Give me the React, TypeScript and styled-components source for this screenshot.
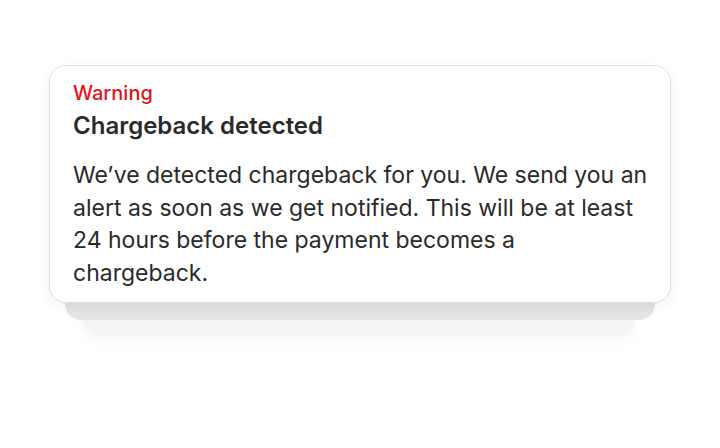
import styled, { createGlobalStyle } from "styled-components";

const GlobalStyle = createGlobalStyle`
  html, body {
    margin: 0;
    padding: 0;
    background: #ffffff;
  }

  body {
    font-family: Inter, "Noto Sans", "Liberation Sans", sans-serif;
    -webkit-font-smoothing: antialiased;
  }
`;

const Page = styled.div`
  width: 720px;
  height: 448px;
  padding: 65px 0 0 49px;
  box-sizing: border-box;
`;

// the card with two faded cards peeking out below it
const Stack = styled.div`
  position: relative;
  width: 622px;

  &::before,
  &::after {
    content: "";
    position: absolute;
    border-radius: 16px;
  }

  /* middle card */
  &::before {
    left: 16px;
    right: 16px;
    bottom: -17px;
    height: 60px;
    background: linear-gradient(180deg, #d9d9d9 0%, #e6e6e6 100%);
    z-index: 1;
  }

  /* back card */
  &::after {
    left: 34px;
    right: 36px;
    bottom: -33px;
    height: 60px;
    background: linear-gradient(180deg, #ececec 0%, #f6f6f6 100%);
    box-shadow: 0 6px 14px rgba(0, 0, 0, 0.03);
    z-index: 0;
  }
`;

const Card = styled.div`
  position: relative;
  z-index: 2;
  background: #ffffff;
  border: 1.5px solid #dedede;
  border-radius: 17px;
  padding: 15px 20px 13px 23px;
  box-shadow: 0 4px 14px rgba(0, 0, 0, 0.06);
`;

const Label = styled.div<{ $tone?: "warning" | "info" }>`
  font-size: 20px;
  font-weight: 500;
  line-height: 24px;
  color: ${(p) => (p.$tone === "info" ? "#1a5fd0" : "#e0161b")};
`;

const Title = styled.h2`
  margin: 6px 0 0;
  font-size: 24px;
  font-weight: 600;
  line-height: 30px;
  color: #2a2a2a;
`;

const Body = styled.p`
  margin: 18px 0 0;
  font-size: 23px;
  font-weight: 400;
  line-height: 32.5px;
  color: #2a2a2a;
`;

export default function App() {
  return (
    <>
      <GlobalStyle />
      <Page>
        <Stack>
          <Card>
            <Label $tone="warning">Warning</Label>
            <Title>Chargeback detected</Title>
            <Body>
              We’ve detected chargeback for you. We send you an alert as soon as
              we get notified. This will be at least 24 hours before the payment
              becomes a chargeback.
            </Body>
          </Card>
        </Stack>
      </Page>
    </>
  );
}
